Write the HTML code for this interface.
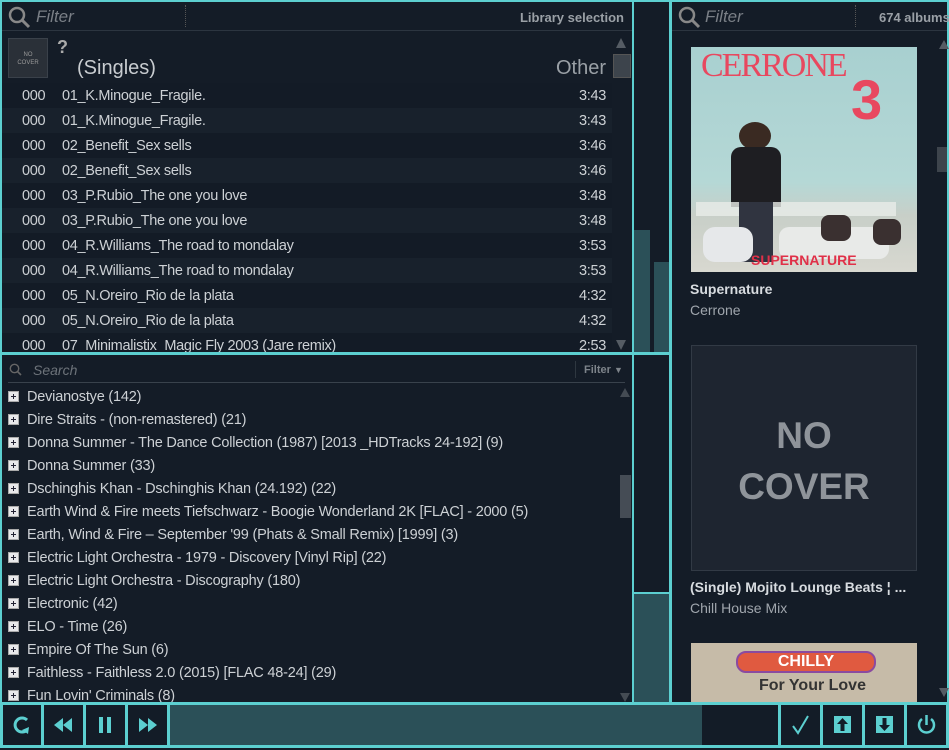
<!DOCTYPE html>
<html><head><meta charset="utf-8"><style>
*{margin:0;padding:0;box-sizing:border-box}
body{width:949px;height:748px;background:#141c27;position:relative;overflow:hidden;font-family:"Liberation Sans",sans-serif;color:#cdd1d5}
.a{position:absolute}
.c{background:#5ccfd0}
.row{position:absolute;left:2px;width:610px;height:25px;font-size:14.5px;line-height:27px;letter-spacing:-0.3px}
.row .n{position:absolute;left:20px}
.row .t{position:absolute;left:60px}
.row .d{position:absolute;right:6px}
.tr{position:absolute;left:8px;height:23px;font-size:14.5px;line-height:26px;white-space:nowrap;letter-spacing:-0.2px}
.tr i{display:inline-block;width:11px;height:11px;border:1px solid #aaa;background:#e8e8ea;vertical-align:-1px;margin-right:8px;position:relative}
.tr i:before{content:"";position:absolute;left:2px;top:4px;width:5px;height:1px;background:#223}
.tr i:after{content:"";position:absolute;left:4px;top:2px;width:1px;height:5px;background:#223}
.btn{position:absolute;top:705px;height:40px;background:#131c27}
.tri{position:absolute;width:0;height:0;border-left:5px solid transparent;border-right:5px solid transparent}
</style></head><body>
<div class="a c" style="left:0;top:0;width:949px;height:2px"></div>
<div class="a c" style="left:0;top:0;width:2px;height:705px"></div>
<div class="a c" style="left:632px;top:0;width:2px;height:705px"></div>
<div class="a c" style="left:669px;top:0;width:3px;height:705px"></div>
<div class="a c" style="left:947px;top:0;width:2px;height:705px"></div>
<div class="a c" style="left:0;top:352px;width:670px;height:3px"></div>

<svg class="a" style="left:8px;top:6px" width="24" height="24"><circle cx="9" cy="9" r="7" fill="none" stroke="#888" stroke-width="2.5"/><line x1="14" y1="14" x2="21" y2="21" stroke="#888" stroke-width="3"/></svg>
<div class="a" style="left:36px;top:7px;font-size:17px;font-style:italic;color:#7a7f86">Filter</div>
<div class="a" style="left:185px;top:5px;height:22px;border-left:1px dotted #555"></div>
<div class="a" style="right:325px;top:10px;font-size:13px;font-weight:bold;color:#9aa0a6">Library selection</div>
<div class="a" style="left:2px;top:30px;width:630px;height:1px;background:#2c3540"></div>

<div class="a" style="left:8px;top:38px;width:40px;height:40px;background:#2a3038;border:1px solid #3a414a;color:#999;font-size:6px;text-align:center;padding-top:12px;line-height:8px">NO<br>COVER</div>
<div class="a" style="left:57px;top:37px;font-size:18px;font-weight:bold;color:#aaa">?</div>
<div class="a" style="left:77px;top:57px;font-size:20px;color:#c8ccd0">(Singles)</div>
<div class="a" style="right:343px;top:57px;font-size:20px;color:#9aa0a6">Other</div>

<div class="row" style="top:83px;background:#131b26"><span class="n">000</span><span class="t">01_K.Minogue_Fragile.</span><span class="d">3:43</span></div>
<div class="row" style="top:108px;background:#18212c"><span class="n">000</span><span class="t">01_K.Minogue_Fragile.</span><span class="d">3:43</span></div>
<div class="row" style="top:133px;background:#131b26"><span class="n">000</span><span class="t">02_Benefit_Sex sells</span><span class="d">3:46</span></div>
<div class="row" style="top:158px;background:#18212c"><span class="n">000</span><span class="t">02_Benefit_Sex sells</span><span class="d">3:46</span></div>
<div class="row" style="top:183px;background:#131b26"><span class="n">000</span><span class="t">03_P.Rubio_The one you love</span><span class="d">3:48</span></div>
<div class="row" style="top:208px;background:#18212c"><span class="n">000</span><span class="t">03_P.Rubio_The one you love</span><span class="d">3:48</span></div>
<div class="row" style="top:233px;background:#131b26"><span class="n">000</span><span class="t">04_R.Williams_The road to mondalay</span><span class="d">3:53</span></div>
<div class="row" style="top:258px;background:#18212c"><span class="n">000</span><span class="t">04_R.Williams_The road to mondalay</span><span class="d">3:53</span></div>
<div class="row" style="top:283px;background:#131b26"><span class="n">000</span><span class="t">05_N.Oreiro_Rio de la plata</span><span class="d">4:32</span></div>
<div class="row" style="top:308px;background:#18212c"><span class="n">000</span><span class="t">05_N.Oreiro_Rio de la plata</span><span class="d">4:32</span></div>
<div class="row" style="top:333px;height:19px;overflow:hidden;background:#131b26"><span class="n">000</span><span class="t">07_Minimalistix_Magic Fly 2003 (Jare remix)</span><span class="d">2:53</span></div>
<div class="tri" style="left:616px;top:38px;border-bottom:10px solid #555c64"></div>
<div class="a" style="left:613px;top:54px;width:18px;height:24px;background:#3d444c;border:1px solid #555"></div>
<div class="tri" style="left:616px;top:340px;border-top:10px solid #555c64"></div>

<div class="a" style="left:634px;top:230px;width:16px;height:122px;background:#2b5058"></div>
<div class="a" style="left:654px;top:262px;width:15px;height:90px;background:#2b5058"></div>
<div class="a c" style="left:634px;top:592px;width:35px;height:2px"></div>
<div class="a" style="left:634px;top:594px;width:35px;height:109px;background:#2b5058"></div>

<svg class="a" style="left:9px;top:363px" width="14" height="14"><circle cx="5.5" cy="5.5" r="4.2" fill="none" stroke="#666" stroke-width="1.4"/><line x1="8.5" y1="8.5" x2="12" y2="12" stroke="#666" stroke-width="1.6"/></svg>
<div class="a" style="left:33px;top:362px;font-size:14px;font-style:italic;color:#6d737a">Search</div>
<div class="a" style="left:575px;top:361px;height:17px;border-left:1px solid #2e3740"></div>
<div class="a" style="left:584px;top:364px;font-size:11px;font-weight:bold;color:#7d838a">Filter <span style="font-size:9px">▼</span></div>
<div class="a" style="left:8px;top:382px;width:617px;height:1px;background:#39424c"></div>
<div class="tri" style="left:620px;top:388px;border-bottom:9px solid #444b53"></div>
<div class="a" style="left:620px;top:475px;width:11px;height:43px;background:#454c55"></div>
<div class="tri" style="left:620px;top:693px;border-top:9px solid #444b53"></div>
<div class="tr" style="top:384px"><i></i>Devianostye (142)</div>
<div class="tr" style="top:407px"><i></i>Dire Straits - (non-remastered) (21)</div>
<div class="tr" style="top:430px"><i></i>Donna Summer - The Dance Collection (1987) [2013 _HDTracks 24-192] (9)</div>
<div class="tr" style="top:453px"><i></i>Donna Summer (33)</div>
<div class="tr" style="top:476px"><i></i>Dschinghis Khan - Dschinghis Khan (24.192) (22)</div>
<div class="tr" style="top:499px"><i></i>Earth Wind &amp; Fire meets Tiefschwarz - Boogie Wonderland 2K [FLAC] - 2000 (5)</div>
<div class="tr" style="top:522px"><i></i>Earth, Wind &amp; Fire – September '99 (Phats &amp; Small Remix) [1999] (3)</div>
<div class="tr" style="top:545px"><i></i>Electric Light Orchestra - 1979 - Discovery [Vinyl Rip] (22)</div>
<div class="tr" style="top:568px"><i></i>Electric Light Orchestra - Discography (180)</div>
<div class="tr" style="top:591px"><i></i>Electronic (42)</div>
<div class="tr" style="top:614px"><i></i>ELO - Time (26)</div>
<div class="tr" style="top:637px"><i></i>Empire Of The Sun (6)</div>
<div class="tr" style="top:660px"><i></i>Faithless - Faithless 2.0 (2015) [FLAC 48-24] (29)</div>
<div class="tr" style="top:683px;height:20px;overflow:hidden"><i></i>Fun Lovin' Criminals (8)</div>

<svg class="a" style="left:678px;top:6px" width="24" height="24"><circle cx="9" cy="9" r="7" fill="none" stroke="#888" stroke-width="2.5"/><line x1="14" y1="14" x2="21" y2="21" stroke="#888" stroke-width="3"/></svg>
<div class="a" style="left:705px;top:7px;font-size:17px;font-style:italic;color:#7a7f86">Filter</div>
<div class="a" style="left:855px;top:5px;height:22px;border-left:1px dotted #555"></div>
<div class="a" style="left:879px;top:10px;font-size:13px;font-weight:bold;color:#9aa0a6;white-space:nowrap">674 albums</div>
<div class="a" style="left:672px;top:30px;width:275px;height:1px;background:#2c3540"></div>
<div class="tri" style="left:939px;top:40px;border-bottom:9px solid #555c64"></div>
<div class="a" style="left:937px;top:147px;width:10px;height:25px;background:#3d444c"></div>
<div class="tri" style="left:939px;top:688px;border-top:9px solid #555c64"></div>

<div class="a" style="left:691px;top:47px;width:226px;height:225px;background:linear-gradient(180deg,#a8d0d0 0%,#b5d8d6 60%,#c8cfc8 75%,#d8d8d0 100%);overflow:hidden">
 <div class="a" style="left:10px;top:0;font-family:'Liberation Serif',serif;font-size:34px;color:#e8485f;letter-spacing:-2px">CERRONE</div>
 <div class="a" style="left:160px;top:20px;font-size:56px;font-weight:bold;color:#e8485f">3</div>
 <div class="a" style="left:48px;top:75px;width:32px;height:28px;background:#3a2a22;border-radius:50%"></div>
 <div class="a" style="left:40px;top:100px;width:50px;height:60px;background:#1e1e22;border-radius:10px 10px 0 0"></div>
 <div class="a" style="left:5px;top:155px;width:200px;height:14px;background:#e8ece8;opacity:.8"></div>
 <div class="a" style="left:48px;top:155px;width:34px;height:60px;background:#303440"></div>
 <div class="a" style="left:12px;top:180px;width:50px;height:35px;background:#e6e8ea;border-radius:12px"></div>
 <div class="a" style="left:88px;top:180px;width:110px;height:32px;background:#e8eae8;border-radius:10px"></div>
 <div class="a" style="left:130px;top:168px;width:30px;height:26px;background:#3a3030;border-radius:8px"></div>
 <div class="a" style="left:182px;top:172px;width:28px;height:26px;background:#3a3030;border-radius:8px"></div>
 <div class="a" style="left:60px;top:205px;font-size:14px;font-weight:bold;color:#e03048">SUPERNATURE</div>
</div>
<div class="a" style="left:690px;top:281px;font-size:14px;font-weight:bold;color:#d8dce0">Supernature</div>
<div class="a" style="left:690px;top:302px;font-size:14px;color:#a0a6ad">Cerrone</div>

<div class="a" style="left:691px;top:345px;width:226px;height:226px;background:#1e2530;border:1px solid #323a45;text-align:center;color:#8f949a;font-size:37px;font-weight:bold;line-height:51px;padding-top:64px">NO<br>COVER</div>
<div class="a" style="left:690px;top:579px;font-size:14px;font-weight:bold;color:#d8dce0;white-space:nowrap">(Single) Mojito Lounge Beats ¦ ...</div>
<div class="a" style="left:690px;top:600px;font-size:14px;color:#a0a6ad">Chill House Mix</div>

<div class="a" style="left:691px;top:643px;width:226px;height:60px;background:#c6bba8;overflow:hidden">
 <div class="a" style="left:45px;top:8px;width:140px;height:22px;background:#e05a40;border:2px solid #8a4aa0;border-radius:10px;color:#fff;font-weight:bold;text-align:center;font-size:16px;line-height:18px">CHILLY</div>
 <div class="a" style="left:68px;top:34px;font-size:16px;font-weight:bold;color:#333">For Your Love</div>
</div>

<div class="a c" style="left:0;top:702px;width:949px;height:46px"></div>
<div class="btn" style="left:3px;width:38px"><svg width="38" height="40"><path d="M24 15 A7 7 0 1 0 24 25" fill="none" stroke="#5ccfd0" stroke-width="3"/><path d="M19 25 L26 22 L25 29 Z" fill="#5ccfd0"/></svg></div>
<div class="btn" style="left:44px;width:39px"><svg width="39" height="40"><path d="M19 13 L10 20 L19 27Z M28 13 L19 20 L28 27Z" fill="#5ccfd0"/></svg></div>
<div class="btn" style="left:86px;width:39px"><svg width="39" height="40"><rect x="13" y="12" width="4" height="16" fill="#5ccfd0"/><rect x="21" y="12" width="4" height="16" fill="#5ccfd0"/></svg></div>
<div class="btn" style="left:128px;width:39px"><svg width="39" height="40"><path d="M11 13 L20 20 L11 27Z M20 13 L29 20 L20 27Z" fill="#5ccfd0"/></svg></div>
<div class="a" style="left:170px;top:705px;width:532px;height:40px;background:#2b5058"></div>
<div class="btn" style="left:702px;width:76px"></div>
<div class="btn" style="left:781px;width:39px"><svg width="39" height="40"><path d="M12 21 L17 28 L27 11" fill="none" stroke="#5ccfd0" stroke-width="2"/></svg></div>
<div class="btn" style="left:823px;width:39px"><svg width="39" height="40"><rect x="11" y="11" width="17" height="17" fill="#5ccfd0"/><path d="M19.5 13 L25 19 L21.5 19 L21.5 26 L17.5 26 L17.5 19 L14 19Z" fill="#131c27"/></svg></div>
<div class="btn" style="left:865px;width:39px"><svg width="39" height="40"><rect x="11" y="11" width="17" height="17" fill="#5ccfd0"/><path d="M19.5 26 L25 20 L21.5 20 L21.5 13 L17.5 13 L17.5 20 L14 20Z" fill="#131c27"/></svg></div>
<div class="btn" style="left:907px;width:39px"><svg width="39" height="40"><path d="M15 14 A7.5 7.5 0 1 0 24 14" fill="none" stroke="#5ccfd0" stroke-width="2.5"/><line x1="19.5" y1="10" x2="19.5" y2="20" stroke="#5ccfd0" stroke-width="2.5"/></svg></div>
</body></html>
